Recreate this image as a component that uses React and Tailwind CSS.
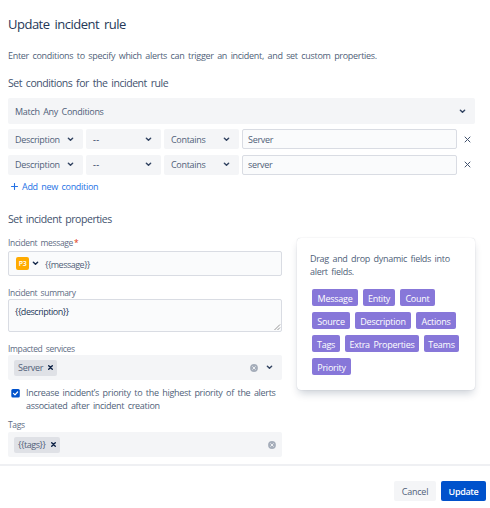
import React from "react";

function Chevron({ className = "text-[#344563]" }) {
  return (
    <svg width="7" height="5" viewBox="0 0 7 5" className={`shrink-0 ${className}`} fill="none" stroke="currentColor" strokeWidth="1.5" strokeLinecap="round" strokeLinejoin="round">
      <path d="M1.4 1.3 3.5 3.2 5.6 1.3" />
    </svg>
  );
}

function Cross({ size = 7, width = 1 }) {
  return (
    <svg width={size} height={size} viewBox="0 0 7 7" className="shrink-0" stroke="currentColor" strokeWidth={width} strokeLinecap="round">
      <path d="M1 1 6 6M6 1 1 6" />
    </svg>
  );
}

function Clear() {
  return (
    <svg width="8" height="8" viewBox="0 0 8 8" className="shrink-0">
      <circle cx="4" cy="4" r="3.9" fill="#a5adba" />
      <path d="M2.7 2.7 5.3 5.3M5.3 2.7 2.7 5.3" stroke="#f4f5f7" strokeWidth="0.9" strokeLinecap="round" />
    </svg>
  );
}

function SmallSelect({ children }) {
  return (
    <div className="flex h-5 w-[75px] items-center justify-between rounded-xs bg-[#f4f5f7] pr-[9px] pl-[7px]">
      <span className="pt-px">{children}</span>
      <Chevron />
    </div>
  );
}

function Condition({ value }) {
  return (
    <div className="flex h-[20.5px] items-center gap-[3px]">
      <SmallSelect>Description</SmallSelect>
      <SmallSelect><span className="font-semibold tracking-[0.4px]">--</span></SmallSelect>
      <SmallSelect>Contains</SmallSelect>
      <div className="flex h-5 w-[215px] items-center rounded-xs border border-[#d9dce3] bg-[#fafbfc] pt-px pl-[5px]">{value}</div>
      <div className="flex w-[15px] justify-center text-[#42526e]">
        <Cross />
      </div>
    </div>
  );
}

function Label({ children }) {
  return <div className="h-3 pt-px text-[8.5px] leading-3 font-medium tracking-[-0.35px] text-[#5e6c84]">{children}</div>;
}

function Chip({ children, className }) {
  return (
    <div className={`flex h-4 items-center justify-between rounded-xs bg-[#dfe1e6] pr-[4px] pl-[4px] ${className}`}>
      <span className="pt-px">{children}</span>
      <span className="text-[#091e42]"><Cross size={5} width={1.9} /></span>
    </div>
  );
}

const fields = [
  [["Message", "w-[46px]"], ["Entity", "w-[32px]"], ["Count", "w-[35px]"]],
  [["Source", "w-[38px]"], ["Description", "w-[56px]"], ["Actions", "w-[40px]"]],
  [["Tags", "w-[28px]"], ["Extra Properties", "w-[74px]"], ["Teams", "w-[35px]"]],
  [["Priority", "w-[39px]"]],
];

export default function App() {
  return (
    <div className="h-[508px] w-[490px] overflow-hidden bg-white font-['Open_Sans','Noto_Sans',sans-serif] text-[9px] leading-3 tracking-[-0.3px] [word-spacing:1.5px] whitespace-nowrap text-[#505f79]">
      <main className="h-[466px] border-b-2 border-[#eff0f3] pl-2">
        <h1 className="pt-[14px] text-[13px] leading-5 tracking-[-0.5px] text-[#253858] [word-spacing:2px]">Update incident rule</h1>
        <p className="mt-4">
          Enter conditions to specify which alerts can trigger an incident, and set custom properties.
        </p>
        <h2 className="mt-[13px] text-[10.5px] leading-4 tracking-[-0.45px] text-[#42526e]">Set conditions for the incident rule</h2>
        <div className="mt-[7px] flex h-[26px] w-[467px] items-center justify-between rounded-xs bg-[#f4f5f7] pr-[9px] pl-[7px]">
          <span className="pt-px">Match Any Conditions</span>
          <Chevron />
        </div>
        <div className="mt-[5px] flex flex-col gap-[5px]">
          <Condition value="Server" />
          <Condition value="server" />
        </div>
        <div className="mt-[6px] flex h-3 items-center gap-[4px] pl-[3px] text-[#2572e5]">
          <svg width="7" height="7" viewBox="0 0 7 7" className="-mt-px" stroke="currentColor" strokeWidth="1.1" strokeLinecap="round">
            <path d="M3.5.5v6M.5 3.5h6" />
          </svg>
          <span>Add new condition</span>
        </div>
        <h2 className="mt-[18px] text-[10.5px] leading-4 tracking-[-0.45px] text-[#42526e]">Set incident properties</h2>
        <div className="mt-[9px] flex gap-[15px]">
          <section className="w-[274px]">
            <Label>Incident message<span className="pl-px text-[#de350b]">*</span></Label>
            <div className="mt-[3px] flex h-[25px] items-center rounded-xs border border-[#d9dce3] bg-[#fafbfc] pl-[7px]">
              <span className="flex h-[13px] w-[13px] items-center justify-center rounded-xs bg-[#ffab00] text-[7px] font-semibold text-white">P3</span>
              <Chevron className="ml-[3px] text-[#172b4d]" />
              <span className="pt-[2px] pl-[6px] tracking-[-0.5px]">{"{{message}}"}</span>
            </div>
            <div className="mt-[10px]"><Label>Incident summary</Label></div>
            <div className="mt-px flex h-[33px] items-start justify-between rounded-xs border border-[#d9dce3] bg-[#fafbfc] pt-[6px] pl-[6px] tracking-[-0.46px] text-[#253858]">
              <span>{"{{description}}"}</span>
              <svg width="7" height="7" viewBox="0 0 7 7" className="self-end" stroke="#6b6b6b" strokeWidth="0.7">
                <path d="M.5 6 6 .5M3.5 6 6 3.5" />
              </svg>
            </div>
            <div className="mt-[10px]"><Label>Impacted services</Label></div>
            <div className="mt-px flex h-[25px] items-center rounded-xs bg-[#f4f5f7] pr-[9px] pl-[6px]">
              <Chip className="w-[43px]">Server</Chip>
              <div className="ml-auto flex items-center gap-[8px]">
                <Clear />
                <Chevron />
              </div>
            </div>
            <div className="mt-[6px] flex gap-[6px] pl-[3px] leading-[12.5px]">
              <svg width="9" height="9" viewBox="0 0 9 9" className="mt-[3px] shrink-0">
                <rect x=".3" width="8.5" height="8.5" rx="1.5" fill="#0052cc" />
                <path d="m2.5 4.3 1.5 1.5 2.6-2.8" fill="none" stroke="white" strokeWidth="1.2" strokeLinecap="round" strokeLinejoin="round" />
              </svg>
              <p className="-mb-px pt-px">
                Increase incident’s priority to the highest priority of the alerts
                <br />
                associated after incident creation
              </p>
            </div>
            <div className="mt-[7px] mb-[2px]"><Label>Tags</Label></div>
            <div className="flex h-[25px] items-center rounded-xs bg-[#f4f5f7] pr-[6px] pl-[6px]">
              <Chip className="w-[46px] tracking-[-0.42px]">{"{{tags}}"}</Chip>
              <div className="ml-auto"><Clear /></div>
            </div>
          </section>
          <aside className="mt-[2px] h-[152px] w-[178px] rounded-[4px] bg-white pt-[14px] pl-[13px] shadow-[0_5px_9px_-2px_rgba(9,30,66,0.22),0_0_1px_rgba(9,30,66,0.25)]">
            <p className="leading-[13px]">
              Drag and drop dynamic fields into
              <br />
              alert fields.
            </p>
            <div className="mt-[11px] ml-[2px] flex flex-col gap-[6px]">
              {fields.map((row, i) => (
                <div key={i} className="flex gap-[5px]">
                  {row.map(([name, width]) => (
                    <span key={name} className={`flex h-[17px] items-center justify-center rounded-xs bg-[#8777d9] pt-[2px] font-medium tracking-[-0.25px] text-white ${width}`}>{name}</span>
                  ))}
                </div>
              ))}
            </div>
          </aside>
        </div>
      </main>
      <footer className="flex justify-end gap-[5px] pt-[15px] pr-[4px]">
        <button className="h-5 w-[42px] rounded-xs bg-[#f4f5f7] pt-px tracking-[-0.25px] text-[#505f79]">Cancel</button>
        <button className="h-5 w-[45px] rounded-xs bg-[#0052cc] pt-px font-semibold tracking-[-0.35px] text-white">Update</button>
      </footer>
    </div>
  );
}
